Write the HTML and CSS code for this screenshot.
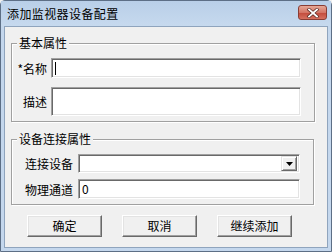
FILE: index.html
```html
<!DOCTYPE html>
<html>

<head>
    <meta charset="utf-8">
    <title>添加监视器设备配置</title>
    <link rel="stylesheet" href="styles.css">
</head>

<body>
    <div class="window">
        <div class="titlebar">
            <span class="title">添加监视器设备配置</span>
            <span class="close">
                <svg width="14" height="10" viewBox="0 0 14 10">
                    <path d="M3 1.5 L11 8.5 M11 1.5 L3 8.5" stroke="#5a2a24" stroke-width="3.2" stroke-linecap="square" />
                    <path d="M3 1.5 L11 8.5 M11 1.5 L3 8.5" stroke="#fff" stroke-width="1.8" stroke-linecap="square" />
                </svg>
            </span>
        </div>

        <div class="client">
            <div class="group group-basic">
                <div class="group-title">基本属性</div>
                <div class="row">
                    <span class="label label-basic">*名称</span>
                    <div class="field"><span class="caret"></span></div>
                </div>
                <div class="row row-desc">
                    <span class="label label-basic">描述</span>
                    <div class="field field-area"></div>
                </div>
            </div>

            <div class="group group-conn">
                <div class="group-title">设备连接属性</div>
                <div class="row">
                    <span class="label label-conn">连接设备</span>
                    <div class="field field-select">
                        <span class="drop">
                            <svg width="7" height="4" viewBox="0 0 7 4">
                                <path d="M0 0 H7 L3.5 4 Z" fill="#000" />
                            </svg>
                        </span>
                    </div>
                </div>
                <div class="row row-channel">
                    <span class="label label-conn">物理通道</span>
                    <div class="field field-conn">0</div>
                </div>
            </div>

            <div class="buttons">
                <button type="button" class="btn">确定</button>
                <button type="button" class="btn">取消</button>
                <button type="button" class="btn">继续添加</button>
            </div>
        </div>
    </div>
</body>

</html>
```

FILE: styles.css
```css
body {
    margin: 0;
    font-family: "Noto Sans CJK SC", "Liberation Sans", sans-serif;
    font-size: 12px;
    color: #000;
    background-color: #f0f0f0;
}

.window {
    width: 332px;
    height: 252px;
    box-sizing: border-box;
    display: flex;
    flex-direction: column;
    background-color: #c4d7ed;
    border: 1px solid #5d6f86;
    border-radius: 5px 5px 0 0;
    padding: 0 3px 3px 3px;
}

.titlebar {
    height: 25px;
    display: flex;
    align-items: center;
    justify-content: space-between;
    background: linear-gradient(#b9cfe8, #c6d9ee);
    margin: 0 -3px;
    padding: 0 4px 0 6px;
}

.title {
    font-size: 12px;
    letter-spacing: 0.4px;
    margin-top: -1px;
}

.close {
    width: 29px;
    height: 15px;
    margin-top: -2px;
    box-sizing: border-box;
    border: 1px solid #8a3d34;
    border-radius: 3px;
    background: linear-gradient(#e6a896, #d47566 50%, #c24a3b 51%, #d6705f);
    display: flex;
    align-items: center;
    justify-content: center;
}

.client {
    flex: 1;
    background-color: #f0f0f0;
    border: 1px solid #8fa4bd;
    padding: 0 12px 0 6px;
    display: flex;
    flex-direction: column;
}

.group {
    border: 1px solid #a0a0a0;
    box-shadow: 1px 1px 0 #fff, inset 1px 1px 0 #fff;
    padding: 0 13px 5px 0;
    display: flex;
    flex-direction: column;
}

.group-basic {
    margin-top: 16px;
}

.group-conn {
    margin-top: 17px;
    margin-right: 1px;
}

.group-title {
    align-self: flex-start;
    margin: -8px 0 0 5px;
    padding: 0 2px;
    line-height: 14px;
    background-color: #f0f0f0;
}

.row {
    display: flex;
    align-items: center;
    margin-top: 8px;
}

.row-desc {
    margin-top: 9px;
    align-items: flex-start;
}

.row-channel {
    margin-top: 6px;
}

.label {
    text-align: right;
    white-space: nowrap;
    box-sizing: border-box;
}

.label-basic {
    width: 39px;
    padding-right: 4px;
}

.row-desc .label-basic {
    padding-top: 6px;
}

.label-conn {
    width: 66px;
    padding-right: 5px;
}

.field {
    flex: 1;
    height: 20px;
    box-sizing: border-box;
    background-color: #fff;
    border-top: 1px solid #a0a0a0;
    border-left: 1px solid #a0a0a0;
    border-right: 1px solid #fff;
    border-bottom: 1px solid #fff;
    box-shadow: inset 1px 1px 0 #696969, inset -1px -1px 0 #e3e3e3;
    padding: 0 3px;
    line-height: 18px;
    display: flex;
    align-items: center;
}

.field-area {
    height: 29px;
}

.field-select {
    height: 19px;
    justify-content: flex-end;
    padding: 0 2px 0 0;
}

.caret {
    width: 1px;
    height: 13px;
    background-color: #000;
}

.drop {
    width: 16px;
    height: 15px;
    box-sizing: border-box;
    background-color: #f0f0f0;
    border-top: 1px solid #e3e3e3;
    border-left: 1px solid #e3e3e3;
    border-right: 1px solid #696969;
    border-bottom: 1px solid #696969;
    box-shadow: inset 1px 1px 0 #fff, inset -1px -1px 0 #a0a0a0;
    display: flex;
    align-items: center;
    justify-content: center;
}

.buttons {
    display: flex;
    gap: 20px;
    margin-top: 10px;
    padding-left: 16px;
}

.btn {
    width: 75px;
    height: 22px;
    box-sizing: border-box;
    font-family: "Noto Sans CJK SC", "Liberation Sans", sans-serif;
    font-size: 12px;
    color: #000;
    background-color: #f0f0f0;
    border-top: 1px solid #fff;
    border-left: 1px solid #fff;
    border-right: 1px solid #696969;
    border-bottom: 1px solid #696969;
    box-shadow: inset -1px -1px 0 #a0a0a0, inset 1px 1px 0 #e3e3e3;
    padding: 0;
    line-height: 18px;
}
```
